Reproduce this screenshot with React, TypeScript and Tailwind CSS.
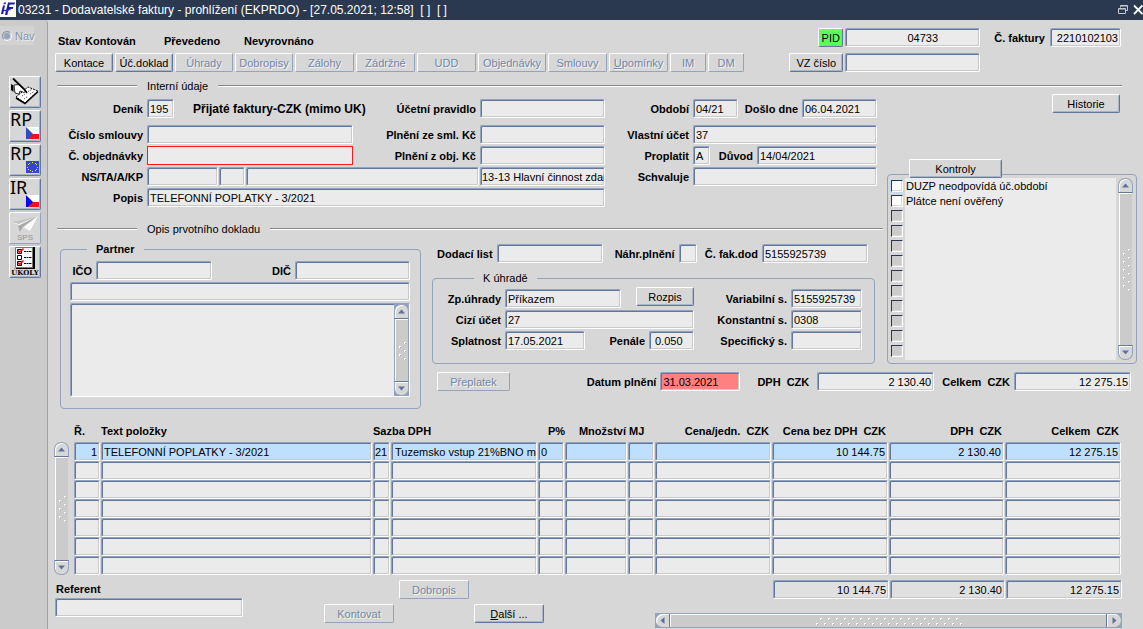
import React from 'react';
import { twMerge } from 'tailwind-merge';

type FieldProps = React.InputHTMLAttributes<HTMLInputElement>;

function Field({ className, value = '', ...rest }: FieldProps) {
  return (
    <input
      type="text"
      readOnly
      value={value}
      className={twMerge(
        'h-[19px] min-w-0 rounded-[2px] border border-[#93a3bb] border-r-white border-b-white bg-[#ebebeb] px-[2px] text-black shadow-[inset_1px_1px_#62779b,inset_-1px_-1px_#cacaca] outline-none',
        className
      )}
      {...rest}
    />
  );
}

function Label({ className, ...rest }: React.LabelHTMLAttributes<HTMLLabelElement>) {
  return <label className={twMerge('shrink-0 text-right font-bold whitespace-nowrap', className)} {...rest} />;
}

function Button({ className, disabled, ...rest }: React.ButtonHTMLAttributes<HTMLButtonElement>) {
  return (
    <button
      type="button"
      disabled={disabled}
      className={twMerge(
        'h-[19px] shrink-0 rounded-[2px] border border-white bg-[#d7d7d7] text-center whitespace-nowrap',
        disabled
          ? 'border-r-[#93a3bb] border-b-[#93a3bb] text-[#7186a8] text-shadow-[1px_1px_#f4f4f4]'
          : 'border-r-[#62779b] border-b-[#62779b] text-black shadow-[inset_-1px_-1px_#a9b4c5]',
        className
      )}
      {...rest}
    />
  );
}

// Horizontal etched line with a caption near its left end
function SectionRule({ children }: { children: React.ReactNode }) {
  return (
    <div className="flex h-[14px] items-center pl-[3px]">
      <div className="h-[2px] w-20 border-b border-white bg-[#868686]" />
      <h2 className="px-[10px]">{children}</h2>
      <div className="h-[2px] flex-1 border-b border-white bg-[#868686]" />
    </div>
  );
}

function Grip({ count, horizontal }: { count: number; horizontal?: boolean }) {
  const dots = Array.from({ length: count }, (_, i) => {
    const along = i * 4 + 1;
    const across = i % 2 === 0 ? 6 : 1;
    return horizontal ? [along, across] : [across, along];
  });
  const length = count * 4;
  return (
    <svg width={horizontal ? length : 9} height={horizontal ? 9 : length} aria-hidden="true">
      {dots.map(([x, y]) => (
        <g key={`${x}-${y}`}>
          <rect x={x + 1} y={y + 1} width="1" height="1" fill="#93a3bb" />
          <rect x={x} y={y} width="2" height="1" fill="#fff" />
          <rect x={x} y={y} width="1" height="2" fill="#fff" />
        </g>
      ))}
    </svg>
  );
}

function Arrow({ d }: { d: string }) {
  return (
    <svg width="7" height="7" viewBox="0 0 7 7" className="shrink-0" aria-hidden="true">
      <path d={d} fill="#5c7399" />
    </svg>
  );
}

function VScroll({ grip, className }: { grip: number; className?: string }) {
  return (
    <div className={twMerge('flex w-[15px] shrink-0 flex-col', className)}>
      <button
        type="button"
        aria-label="Nahoru"
        className="flex h-[15px] items-center justify-center rounded-t-[7px] border border-[#93a3bb] border-b-[#62779b] bg-[#d7d7d7] shadow-[inset_1px_1px_#fff]"
      >
        <Arrow d="M3.5 1.5 7 5.5H0Z" />
      </button>
      <div className="mx-[1px] flex flex-1 items-center justify-center border-t border-l border-white bg-[#cbcbcb]">
        <Grip count={grip} />
      </div>
      <button
        type="button"
        aria-label="Dolů"
        className="flex h-[15px] items-center justify-center rounded-b-[7px] border border-[#93a3bb] border-t-[#62779b] bg-[#d7d7d7] shadow-[inset_1px_1px_#fff]"
      >
        <Arrow d="M3.5 5.5 7 1.5H0Z" />
      </button>
    </div>
  );
}

function HScroll({ grip }: { grip: number }) {
  return (
    <div className="flex h-[15px] border border-[#93a3bb] bg-[#93a3bb]">
      <button
        type="button"
        aria-label="Vlevo"
        className="flex w-[14px] items-center justify-center rounded-l-[7px] border-r border-[#62779b] bg-[#d7d7d7] shadow-[inset_1px_1px_#fff]"
      >
        <Arrow d="M1.5 3.5 5.5 0V7Z" />
      </button>
      <div className="flex flex-1 items-center justify-center border-t border-l border-white bg-[#cbcbcb]">
        <Grip count={grip} horizontal />
      </div>
      <button
        type="button"
        aria-label="Vpravo"
        className="flex w-[15px] items-center justify-center rounded-r-[7px] border-l border-[#62779b] bg-[#d7d7d7] shadow-[inset_1px_1px_#fff]"
      >
        <Arrow d="M5.5 3.5 1.5 0V7Z" />
      </button>
    </div>
  );
}

function TitleBar() {
  return (
    <header className="flex h-5 items-center bg-[#2a394f] text-white">
      <svg width="16" height="17" viewBox="0 0 16 17" className="mb-[3px] shrink-0" aria-hidden="true">
        <rect width="16" height="17" fill="#fff" />
        <path d="M4 2.500h2l-.5 1.700h-2ZM3 5.600h2L3.200 14h-2.200ZM8 2.500h7l-.6 2H9.600L9 7h4.200l-.5 2h-4L7.300 15H5Z" fill="#1a1aa6" />
        <path d="M.8 11 13.500 7.800 6 12.200 5.400 11Z" fill="#2a2acc" />
      </svg>
      <h1 className="flex-1 pl-[2px] text-[12px] leading-5 whitespace-pre">
        03231 - Dodavatelské faktury - prohlížení (EKPRDO) - [27.05.2021; 12:58]  [ ]  [ ]
      </h1>
      <button type="button" aria-label="Obnovit" className="mr-1">
        <svg width="12" height="12" viewBox="0 0 12 12" fill="none" stroke="#c4c9d1" aria-hidden="true">
          <path d="M3.500 3.500v-2h7v5h-2M3.500 2h7M1.500 4.500h7v5h-7ZM1.500 5h7" />
        </svg>
      </button>
      <button type="button" aria-label="Zavřít">
        <svg width="10" height="12" viewBox="0 0 10 12" stroke="#fff" strokeWidth="1.8" aria-hidden="true">
          <path d="M1 1.500 9.500 10M9.500 1.500 1 10" />
        </svg>
      </button>
    </header>
  );
}

function CzechFlag({ blue }: { blue: string }) {
  return (
    <svg width="13" height="12" viewBox="0 0 13 12" className="absolute right-[1px] bottom-[2px]" aria-hidden="true">
      <path d="M0 0h13v7H0Z" fill="#fff" />
      <path d="M0 7h13v5H0Z" fill="#f01418" />
      <path d="M0 0 7 7 2 12H0Z" fill={blue} />
    </svg>
  );
}

const STARS = Array.from({ length: 12 }, (_, i) => [
  Math.round(6 + 5 * Math.cos((i * Math.PI) / 6)),
  Math.round(5.5 + 4.5 * Math.sin((i * Math.PI) / 6)),
]);

function EuFlag() {
  return (
    <svg width="13" height="12" viewBox="0 0 13 12" className="absolute right-[1px] bottom-[2px]" aria-hidden="true">
      <rect width="13" height="12" fill="#3546cc" />
      {STARS.map(([x, y], i) => (
        <rect key={i} x={x} y={y} width="1" height="1" fill="#f2e64a" />
      ))}
    </svg>
  );
}

function ToolButton({ className, children, ...rest }: React.ButtonHTMLAttributes<HTMLButtonElement>) {
  return (
    <button
      type="button"
      className={twMerge(
        'relative size-8 rounded-[2px] border border-white border-r-[#62779b] border-b-[#62779b] bg-[#d7d7d7] text-black shadow-[inset_-1px_-1px_#a9b4c5]',
        className
      )}
      {...rest}
    >
      {children}
    </button>
  );
}

const CODE_TEXT = "block h-[30px] text-left font-['Noto_Sans',sans-serif] text-[18px] leading-4";

function SideBar() {
  return (
    <nav className="flex w-12 shrink-0 flex-col rounded-tr-[4px] border-r border-[#93a3bb] bg-[#cbcbcb] pt-[6px]">
      <label className="flex h-[19px] w-[34px] items-center gap-[3px] bg-[#d3d3d3] pl-[2px] text-[#8494ad] text-shadow-[1px_1px_#f0f0f0]">
        <input
          type="radio"
          disabled
          className="size-[10px] shrink-0 appearance-none rounded-full border border-[#8b97aa] border-r-white border-b-white bg-[#93a3bb] shadow-[inset_0_0_0_1px_#cbcbcb]"
        />
        Nav
      </label>
      <div className="mt-[31px] flex flex-col gap-[2px] pl-[9px]">
        <ToolButton aria-label="Zápis">
          <svg width="30" height="30" viewBox="0 0 30 30" aria-hidden="true">
            <path d="M6 20 18 10 28 14 15 26Z" fill="#fff" stroke="#000" strokeDasharray="2 1" />
            <path d="M6 21 15 26.500 28 14.500" fill="none" stroke="#000" strokeWidth="1.500" />
            <path d="M4 8 9 7.500 13 11 16 14 14 15.500 10 14 9 17 5 16Z" fill="#fff" stroke="#000" strokeWidth="0.800" />
            <path d="M1 7 3.500 8.500V15L1 13Z" fill="#000" />
            <path d="M3 1.500 14 12 17 16" fill="none" stroke="#000" strokeWidth="1.800" />
            <path d="M12 19 15 17M18 14.500 22 12.500M14 22 18 19M20 17 24 14.500" stroke="#666" strokeDasharray="1.500 1" />
          </svg>
        </ToolButton>
        <ToolButton>
          <span className={CODE_TEXT}>RP</span>
          <CzechFlag blue="#3048c0" />
        </ToolButton>
        <ToolButton>
          <span className={CODE_TEXT}>RP</span>
          <EuFlag />
        </ToolButton>
        <ToolButton>
          <span className={CODE_TEXT}>IR</span>
          <CzechFlag blue="#0000ff" />
        </ToolButton>
        <ToolButton
          disabled
          className="flex flex-col items-center border-r-[#93a3bb] border-b-[#93a3bb] text-[#929292] shadow-none"
        >
          <svg width="30" height="20" viewBox="0 0 30 20" className="shrink-0" aria-hidden="true">
            <path d="M1 9 28 3 12 13Z" fill="#fafafa" />
            <path d="M1 9 28 3 9 11Z" fill="#c4c4c4" />
            <path d="M28 3 8 13 10 19 13 15 20 18Z" fill="#e2e2e2" />
            <path d="M28 3 8 13 10 19 13 14Z" fill="#a8a8a8" />
            <path d="M28 3 14 14 20 18Z" fill="#fcfcfc" />
          </svg>
          <span className="text-[8px] leading-[9px]">SPS</span>
        </ToolButton>
        <ToolButton className="flex flex-col items-center">
          <svg width="22" height="22" viewBox="0 0 22 22" className="shrink-0" aria-hidden="true">
            <path d="M2 0h19v22H2Z" fill="#000" />
            <path d="M1.500 .5h17v20h-17Z" fill="#fff" stroke="#777" />
            <path d="M3.500 2.500h4v4h-4ZM3.500 8.500h4v4h-4ZM3.500 14.500h4v4h-4Z" fill="#fff" stroke="#000" />
            <path d="M10 4.500h8M10 10.500h8M10 16.500h8" stroke="#000" strokeDasharray="2 0.500" />
            <path d="M4 3.500 5.500 5.500 9.500 1.500M4 15.500 5.500 17.500 9.500 13.500" fill="none" stroke="#f00" strokeWidth="1.500" />
          </svg>
          <span className="font-['DejaVu_Serif',serif] text-[7px] leading-[8px] font-bold">ÚKOLY</span>
        </ToolButton>
      </div>
    </nav>
  );
}

const TOP_BUTTONS = [
  { text: 'Kontace', width: 'w-[58px]', on: true },
  { text: 'Úč.doklad', width: 'w-[58px]', on: true },
  { text: 'Úhrady', width: 'w-[58px]' },
  { text: 'Dobropisy', width: 'w-[58px]' },
  { text: 'Zálohy', width: 'w-[59px]' },
  { text: 'Zádržné', width: 'w-[59px]' },
  { text: 'UDD', width: 'w-[59px]' },
  { text: 'Objednávky', width: 'w-[68px]' },
  { text: 'Smlouvy', width: 'w-[59px]' },
  { text: 'Upomínky', width: 'w-[59px]', hotkey: true },
  { text: 'IM', width: 'w-[36px]' },
  { text: 'DM', width: 'w-[36px]' },
];

function StatusHeader() {
  return (
    <section className="flex justify-between pt-2 pr-[22px] pl-[1px]">
      <div className="flex flex-col justify-end gap-[5px]">
        <div className="flex pl-[3px] font-bold">
          <span className="w-[27px]">Stav</span>
          <span className="w-[79px]">Kontován</span>
          <span className="w-20">Převedeno</span>
          <span>Nevyrovnáno</span>
        </div>
        <div className="flex gap-[2px]">
          {TOP_BUTTONS.map((b) => (
            <Button key={b.text} disabled={!b.on} className={b.width}>
              {b.hotkey ? (
                <>
                  <span className="underline">{b.text[0]}</span>
                  {b.text.slice(1)}
                </>
              ) : (
                b.text
              )}
            </Button>
          ))}
        </div>
      </div>
      <div className="flex gap-[14px]">
        <div className="flex flex-col items-end gap-[6px]">
          <div className="flex gap-[2px]">
            <Button className="w-[25px] bg-[#5cff5c]">PID</Button>
            <Field aria-label="PID" value="04733" className="w-[135px] pl-[22px] text-center" />
          </div>
          <div className="flex gap-[2px]">
            <Button className="w-[54px]">VZ číslo</Button>
            <Field aria-label="VZ číslo" className="w-[135px]" />
          </div>
        </div>
        <div className="flex h-[19px] items-center gap-[5px]">
          <Label htmlFor="faktura">Č. faktury</Label>
          <Field id="faktura" value="2210102103" className="w-[71px] text-right" />
        </div>
      </div>
    </section>
  );
}

const KEY = 'w-[89px]';
const KEY_R = 'w-[84px]';

function InternalData() {
  return (
    <div className="flex pt-[6px]">
      <div className="flex flex-1 flex-col gap-[2px]">
        <div className="mb-[5px] flex items-center gap-1">
          <Label htmlFor="denik" className={KEY}>Deník</Label>
          <Field id="denik" value="195" className="w-[27px]" />
          <span className="pl-[15px] text-[12px] font-bold whitespace-nowrap">Přijaté faktury-CZK (mimo UK)</span>
          <Label htmlFor="pravidlo" className="ml-auto">Účetní pravidlo</Label>
          <Field id="pravidlo" className="w-[125px]" />
        </div>
        <div className="flex items-center gap-1">
          <Label htmlFor="smlouva" className={KEY}>Číslo smlouvy</Label>
          <Field id="smlouva" className="w-[206px]" />
          <Label htmlFor="sml-kc" className="ml-auto">Plnění ze sml. Kč</Label>
          <Field id="sml-kc" className="w-[125px]" />
        </div>
        <div className="flex items-center gap-1">
          <Label htmlFor="objednavka" className={KEY}>Č. objednávky</Label>
          <Field
            id="objednavka"
            className="w-[206px] rounded-none border-[#ff1a1a] border-r-[#ff1a1a] border-b-[#ff1a1a] shadow-none"
          />
          <Label htmlFor="obj-kc" className="ml-auto">Plnění z obj. Kč</Label>
          <Field id="obj-kc" className="w-[125px]" />
        </div>
        <div className="flex items-center gap-[1px]">
          <Label htmlFor="ns" className={`${KEY} mr-[3px]`}>NS/TA/A/KP</Label>
          <Field id="ns" className="w-[71px]" />
          <Field aria-label="TA" className="w-[26px]" />
          <Field aria-label="A" className="flex-1" />
          <Field aria-label="KP" value="13-13 Hlavní činnost zdaň" className="w-[125px] px-[1px] pr-0" />
        </div>
        <div className="flex items-center gap-1">
          <Label htmlFor="popis" className={KEY}>Popis</Label>
          <Field id="popis" value="TELEFONNÍ POPLATKY - 3/2021" className="flex-1" />
        </div>
      </div>
      <div className="flex w-[278px] flex-col gap-[2px] pr-[6px]">
        <div className="mb-[5px] flex items-center gap-1">
          <Label htmlFor="obdobi" className={KEY_R}>Období</Label>
          <Field id="obdobi" value="04/21" className="w-[45px]" />
          <Label htmlFor="doslo" className="ml-auto">Došlo dne</Label>
          <Field id="doslo" value="06.04.2021" className="w-[75px]" />
        </div>
        <div className="flex items-center gap-1">
          <Label htmlFor="ucet" className={KEY_R}>Vlastní účet</Label>
          <Field id="ucet" value="37" className="flex-1" />
        </div>
        <div className="flex items-center gap-1">
          <Label htmlFor="proplatit" className={KEY_R}>Proplatit</Label>
          <Field id="proplatit" value="A" className="w-[17px]" />
          <Label htmlFor="duvod" className="ml-auto">Důvod</Label>
          <Field id="duvod" value="14/04/2021" className="w-[120px]" />
        </div>
        <div className="flex items-center gap-1">
          <Label htmlFor="schvaluje" className={KEY_R}>Schvaluje</Label>
          <Field id="schvaluje" className="flex-1" />
        </div>
      </div>
    </div>
  );
}

function Partner() {
  return (
    <fieldset className="row-span-2 mt-[6px] mr-[11px] ml-[6px] rounded-[4px] border border-[#93a3bb] pr-[10px] pb-[11px] pl-[9px]">
      <legend className="ml-[17px] px-[9px] font-bold">Partner</legend>
      <div className="flex flex-col gap-[2px] pt-[5px]">
        <div className="flex items-center gap-1">
          <Label htmlFor="ico" className="w-[22px]">IČO</Label>
          <Field id="ico" className="w-[116px]" />
          <Label htmlFor="dic" className="ml-auto">DIČ</Label>
          <Field id="dic" className="w-[115px]" />
        </div>
        <Field aria-label="Název partnera" />
        <div className="flex h-[94px] rounded-[2px] border border-[#93a3bb] border-r-white border-b-white bg-[#ebebeb] shadow-[inset_1px_1px_#62779b]">
          <textarea aria-label="Adresa partnera" readOnly className="flex-1 resize-none px-[3px] outline-none" />
          <VScroll grip={5} className="bg-[#93a3bb]" />
        </div>
      </div>
    </fieldset>
  );
}

function Payment() {
  const key = 'w-[64px]';
  return (
    <div className="flex flex-col pt-2">
      <div className="flex items-center gap-1 pr-[15px] pl-[5px]">
        <Label htmlFor="dodaci">Dodací list</Label>
        <Field id="dodaci" className="w-[106px]" />
        <Label htmlFor="nahr" className="ml-2">Náhr.plnění</Label>
        <Field id="nahr" className="w-[18px]" />
        <Label htmlFor="fakdod" className="ml-auto">Č. fak.dod</Label>
        <Field id="fakdod" value="5155925739" className="w-[106px]" />
      </div>
      <fieldset className="mt-2 mr-2 flex-1 rounded-[4px] border border-[#93a3bb] pr-3 pl-1">
        <legend className="ml-[37px] px-[9px]">K úhradě</legend>
        <div className="flex justify-between pt-[4px]">
          <div className="flex w-[257px] flex-col gap-[2px]">
            <div className="flex items-center gap-1">
              <Label htmlFor="zpuhrady" className={key}>Zp.úhrady</Label>
              <Field id="zpuhrady" value="Příkazem" className="w-[116px]" />
              <Button className="-mt-1 ml-auto w-[58px]">Rozpis</Button>
            </div>
            <div className="flex items-center gap-1">
              <Label htmlFor="cizi" className={key}>Cizí účet</Label>
              <Field id="cizi" value="27" className="flex-1" />
            </div>
            <div className="flex items-center gap-1">
              <Label htmlFor="splatnost" className={key}>Splatnost</Label>
              <Field id="splatnost" value="17.05.2021" className="w-20" />
              <Label htmlFor="penale" className="ml-auto">Penále</Label>
              <Field id="penale" value="0.050" className="w-[45px] pl-[5px]" />
            </div>
          </div>
          <div className="flex flex-col gap-[2px]">
            <div className="flex items-center justify-end gap-1">
              <Label htmlFor="vs">Variabilní s.</Label>
              <Field id="vs" value="5155925739" className="w-[71px]" />
            </div>
            <div className="flex items-center justify-end gap-1">
              <Label htmlFor="ks">Konstantní s.</Label>
              <Field id="ks" value="0308" className="w-[71px]" />
            </div>
            <div className="flex items-center justify-end gap-1">
              <Label htmlFor="ss">Specifický s.</Label>
              <Field id="ss" className="w-[71px]" />
            </div>
          </div>
        </div>
      </fieldset>
    </div>
  );
}

const CHECKS = ['DUZP neodpovídá úč.období', 'Plátce není ověřený', '', '', '', '', '', '', '', '', '', ''];

function Checks() {
  return (
    <aside className="row-span-2 flex flex-col pl-1">
      <Button className="mt-[1px] mr-[17px] w-[68px] self-end">Historie</Button>
      <Button className="relative z-10 mt-[46px] -mb-1 ml-[22px] w-[93px] self-start">Kontroly</Button>
      <div className="flex flex-1 rounded-[4px] border border-[#93a3bb] py-[3px] pr-[3px] pl-[2px]">
        <ul className="flex-1 bg-linear-to-r from-[#d7d7d7] from-[15px] to-[#ebebeb] to-[15px] pt-[1px]">
          {CHECKS.map((text, i) => (
            <li key={i} className="h-[15px]">
              <label className="flex items-center">
                <span className={i === 0 ? 'bg-[#bfdfff] p-[1px] leading-none' : 'p-[1px] leading-none'}>
                  <input
                    type="checkbox"
                    disabled={!text}
                    aria-label={text || `Kontrola ${i + 1}`}
                    className="block size-3 appearance-none border border-[#2a394f] border-r-white border-b-white bg-white shadow-[inset_-1px_-1px_#d7d7d7] disabled:bg-[#cbcbcb]"
                  />
                </span>
                <span className="pl-[2px]">{text}</span>
              </label>
            </li>
          ))}
        </ul>
        <VScroll grip={11} className="ml-[2px]" />
      </div>
    </aside>
  );
}

function Totals() {
  return (
    <div className="col-span-2 flex h-[45px] items-start pt-2 pr-[6px] pl-[5px]">
      <Button disabled className="w-[73px]">Přeplatek</Button>
      <div className="ml-auto flex items-center gap-1">
        <Label htmlFor="plneni">Datum plnění</Label>
        <Field id="plneni" value="31.03.2021" className="w-20 bg-[#ff8080]" />
        <Label htmlFor="dph" className="ml-[13px] flex gap-[6px]">
          <span>DPH</span>
          <span>CZK</span>
        </Label>
        <Field id="dph" value="2 130.40" className="ml-1 w-[117px] text-right" />
        <Label htmlFor="celkem" className="ml-1 flex gap-[6px]">
          <span>Celkem</span>
          <span>CZK</span>
        </Label>
        <Field id="celkem" value="12 275.15" className="w-[117px] text-right" />
      </div>
    </div>
  );
}

const COLUMNS = [
  { name: 'Ř.', width: 'w-[27px]', right: true },
  { name: 'Text položky', width: 'w-auto' },
  { name: 'Sazba', width: 'w-[18px]', pad: 'px-[1px] pr-0' },
  { name: 'Sazba DPH', width: 'w-[147px]', pad: 'pl-[3px] pr-0' },
  { name: 'P%', width: 'w-[27px]' },
  { name: 'Množství', width: 'w-[63px]' },
  { name: 'MJ', width: 'w-[27px]' },
  { name: 'Cena/jedn.', width: 'w-[117px]', right: true },
  { name: 'Cena bez DPH', width: 'w-[117px]', right: true },
  { name: 'DPH', width: 'w-[116px]', right: true },
  { name: 'Celkem', width: 'w-[117px]', right: true },
];

const ITEM = [
  '1', 'TELEFONNÍ POPLATKY - 3/2021', '21', 'Tuzemsko vstup 21%BNO mi', '0', '', '', '', '10 144.75', '2 130.40', '12 275.15',
];

const ROWS = [ITEM, ...Array.from({ length: 6 }, () => ITEM.map(() => ''))];

function Items() {
  return (
    <section className="mt-[11px] flex gap-[5px] pr-[21px]">
      <VScroll grip={7} className="mt-[22px]" />
      <table className="flex-1 table-fixed border-collapse">
        <colgroup>
          {COLUMNS.map((c) => (
            <col key={c.name} className={c.width} />
          ))}
        </colgroup>
        <thead>
          <tr className="h-[22px] text-left whitespace-nowrap">
            <th>Ř.</th>
            <th>Text položky</th>
            <th colSpan={2}>Sazba DPH</th>
            <th className="text-right">P%</th>
            <th className="pr-[2px] text-right">
              <span className="flex justify-end">Množství</span>
            </th>
            <th className="pl-[1px]">MJ</th>
            {COLUMNS.slice(7).map((c) => (
              <th key={c.name} className="pr-[3px]">
                <span className="flex justify-end gap-[6px]">
                  <span>{c.name}</span>
                  <span>CZK</span>
                </span>
              </th>
            ))}
          </tr>
        </thead>
        <tbody>
          {ROWS.map((row, r) => (
            <tr key={r}>
              {row.map((cell, c) => (
                <td key={c} className="p-0 pr-[1px]">
                  <Field
                    aria-label={`${COLUMNS[c].name} ${r + 1}`}
                    value={cell}
                    className={twMerge(
                      'block w-full',
                      COLUMNS[c].right && 'text-right',
                      COLUMNS[c].pad,
                      r === 0 && 'bg-[#bfdfff]'
                    )}
                  />
                </td>
              ))}
            </tr>
          ))}
        </tbody>
      </table>
    </section>
  );
}

function Footer() {
  return (
    <footer className="mt-[5px] flex pr-[21px] pl-[1px]">
      <div className="flex w-[188px] flex-col pt-[2px]">
        <Label htmlFor="referent" className="pb-[2px] pl-[1px] text-left">Referent</Label>
        <Field id="referent" />
      </div>
      <div className="ml-[81px] grid grid-cols-3 content-start gap-[5px]">
        <Button disabled className="col-start-2 w-[70px]">Dobropis</Button>
        <Button disabled className="col-start-1 w-[70px]">Kontovat</Button>
        <Button className="col-start-3 row-start-2 w-[70px]">
          <span className="underline">D</span>alší ...
        </Button>
      </div>
      <div className="ml-auto flex w-[467px] flex-col">
        <div className="flex justify-end gap-[1px]">
          <Field aria-label="Součet bez DPH" value="10 144.75" className="w-[116px] bg-[#e0e0e0] text-right" />
          <Field aria-label="Součet DPH" value="2 130.40" className="w-[115px] bg-[#e0e0e0] text-right" />
          <Field aria-label="Součet celkem" value="12 275.15" className="w-[116px] bg-[#e0e0e0] text-right" />
        </div>
        <div className="pt-[14px]">
          <HScroll grip={37} />
        </div>
      </div>
    </footer>
  );
}

export default function App() {
  return (
    <div className="flex min-h-screen flex-col bg-[#d7d7d7] font-['Liberation_Sans',Arial,sans-serif] text-[11px] leading-[14px] text-black">
      <TitleBar />
      <div className="flex flex-1 bg-[#d7d7d7]">
        <SideBar />
        <main className="min-w-0 flex-1 pl-[6px]">
          <StatusHeader />
          <div className="pt-[7px] pr-[21px]">
            <SectionRule>Interní údaje</SectionRule>
          </div>
          <div className="grid grid-cols-[378px_1fr_254px] grid-rows-[auto_1fr_auto] pr-[6px]">
            <div className="col-span-2">
              <InternalData />
              <div className="pt-[15px]">
                <SectionRule>Opis prvotního dokladu</SectionRule>
              </div>
            </div>
            <Checks />
            <Partner />
            <Payment />
            <Totals />
          </div>
          <Items />
          <Footer />
        </main>
      </div>
    </div>
  );
}
